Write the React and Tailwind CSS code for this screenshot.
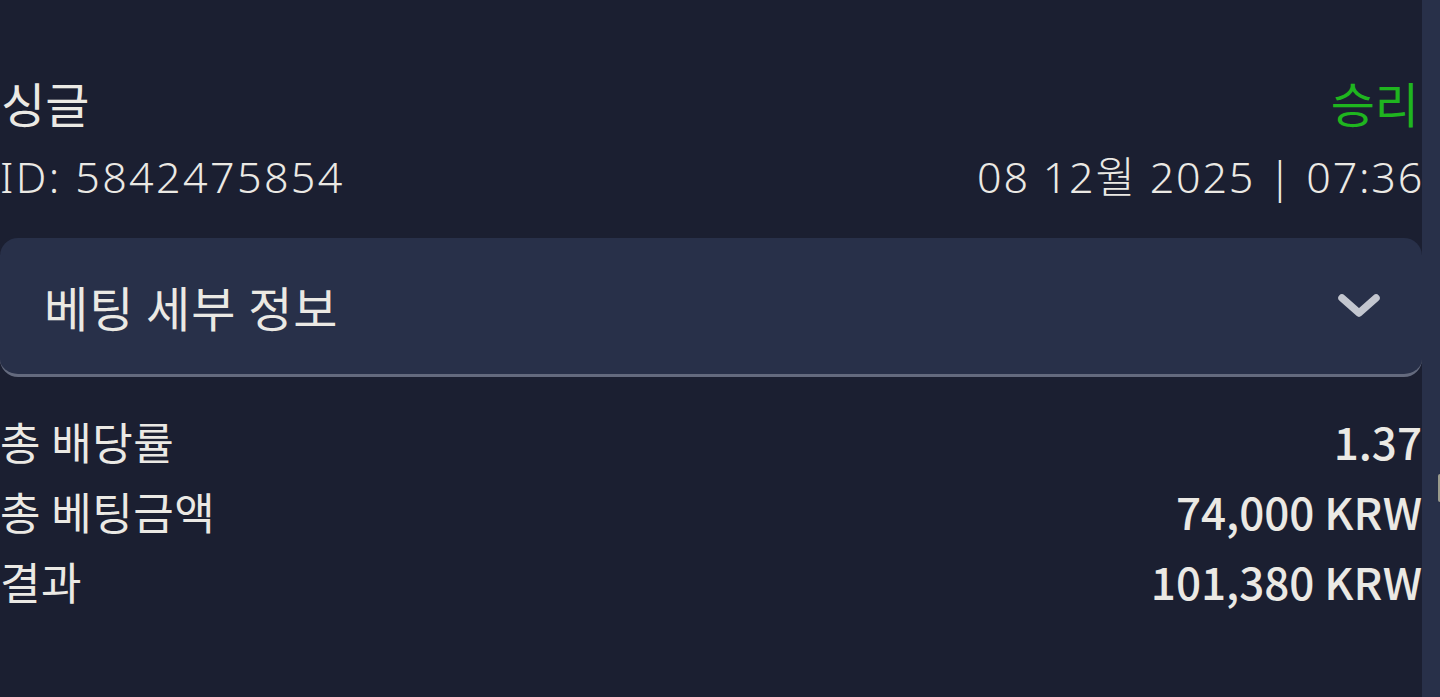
import React, { useState } from 'react';

const FONT = { fontFamily: '"Noto Sans CJK KR", "Noto Sans", sans-serif' };
const META_FONT = { fontFamily: '"Noto Sans", "Noto Sans CJK KR", sans-serif' };

const summary = [
    { label: '총 배당률', value: '1.37' },
    { label: '총 베팅금액', value: '74,000 KRW' },
    { label: '결과', value: '101,380 KRW' },
];

function ChevronDown() {
    return (
        <svg width="42" height="28" viewBox="0 0 42 28" fill="none">
            <path d="M4 6 L21 21 L38 6" stroke="#c3c6cf" strokeWidth="7.5" strokeLinecap="round" strokeLinejoin="round" />
        </svg>
    );
}

function App() {
    const [open, setOpen] = useState(false);

    return (
        <div className="w-[1440px] h-[697px] overflow-hidden flex bg-[#1b1f31] text-[#ebe9e4]" style={FONT}>
            <div className="w-[1422px] flex flex-col pt-[72px]">
                {/* header */}
                <div className="flex items-center justify-between h-[60px]">
                    <span className="text-[48px] leading-none pl-[1px]">싱글</span>
                    <span className="text-[48px] leading-none text-[#1fb51f] pr-[3px]">승리</span>
                </div>
                <div className="flex items-center justify-between h-[60px] mt-[15px] font-light text-[43px]" style={META_FONT}>
                    <span className="tracking-[2.4px]">ID: 5842475854</span>
                    <span className="tracking-[1.8px] -mr-[2px]">08 12월 2025 | 07:36</span>
                </div>

                {/* accordion */}
                <button
                    onClick={() => setOpen(!open)}
                    className="mt-[31px] h-[139px] flex items-center justify-between rounded-[18px] bg-[#283049] border-b-[3px] border-[#646a7e] pl-[44px] pr-[42px] text-left"
                >
                    <span className="text-[48px] leading-none tracking-[1px]">베팅 세부 정보</span>
                    <ChevronDown />
                </button>

                {/* summary */}
                <div className="mt-[29px] flex flex-col">
                    {summary.map((row) => (
                        <div key={row.label} className="flex items-center justify-between h-[70px]">
                            <span className="text-[44px] leading-none tracking-[0.5px]">{row.label}</span>
                            <span className="text-[44px] leading-none font-medium">{row.value}</span>
                        </div>
                    ))}
                </div>
            </div>
            <div className="w-[18px] bg-[#283049] relative">
                <div className="absolute right-0 top-[474px] w-[2px] h-[28px] rounded-l bg-[#9a9b8c]" />
            </div>
        </div>
    );
}

export default App;
